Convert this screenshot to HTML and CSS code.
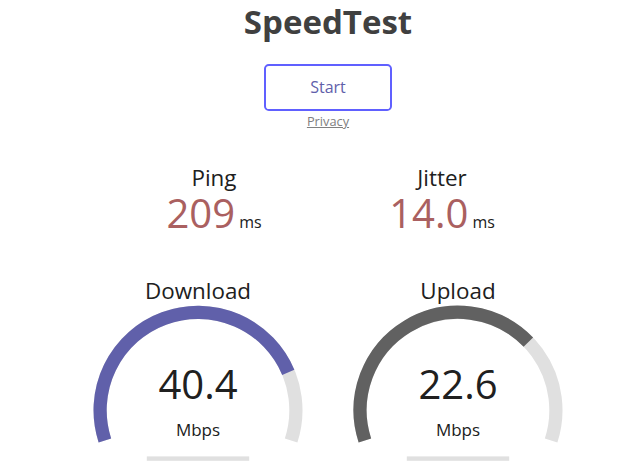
FILE: index.html
```html
<!DOCTYPE html>
<html lang="en">
<head>
<meta charset="utf-8">
<title>SpeedTest</title>
<link rel="stylesheet" href="styles.css">
</head>
<body>
<main class="page">
  <h1 class="title">SpeedTest</h1>
  <div class="start-btn">Start</div>
  <div class="privacy-row"><a class="privacy" href="#">Privacy</a></div>

  <section class="stats">
    <div class="stat">
      <div class="stat-name">Ping</div>
      <div class="stat-line"><span class="stat-value">209</span> <span class="stat-unit">ms</span></div>
    </div>
    <div class="stat">
      <div class="stat-name">Jitter</div>
      <div class="stat-line"><span class="stat-value">14.0</span> <span class="stat-unit">ms</span></div>
    </div>
  </section>

  <section class="gauges">
    <div class="gauge">
      <svg class="meter" viewBox="0 0 256 200" width="256" height="200">
        <path class="meter-bg" d="M34.89 166.45 A97.9 97.9 0 1 1 221.11 166.45"/>
        <path class="meter-dl" d="M34.89 166.45 A97.9 97.9 0 0 1 218.28 98.34"/>
        <rect class="meter-prog" x="76.8" y="182.4" width="102.4" height="4.4"/>
      </svg>
      <div class="gauge-name">Download</div>
      <div class="gauge-value">40.4</div>
      <div class="gauge-unit">Mbps</div>
    </div>
    <div class="gauge">
      <svg class="meter" viewBox="0 0 256 200" width="256" height="200">
        <path class="meter-bg" d="M34.89 166.45 A97.9 97.9 0 1 1 221.11 166.45"/>
        <path class="meter-ul" d="M34.89 166.45 A97.9 97.9 0 0 1 198.36 68.12"/>
        <rect class="meter-prog" x="76.8" y="182.4" width="102.4" height="4.4"/>
      </svg>
      <div class="gauge-name">Upload</div>
      <div class="gauge-value">22.6</div>
      <div class="gauge-unit">Mbps</div>
    </div>
  </section>
</main>
</body>
</html>
```

FILE: styles.css
```css
html, body {
  margin: 0;
  padding: 0;
  overflow: hidden;
  background: #ffffff;
}

body {
  font-family: "Open Sans", "Noto Sans", sans-serif;
  font-size: 16px;
  color: #202020;
}

.page {
  padding-left: 27px;
  display: flex;
  flex-direction: column;
  align-items: center;
  text-align: center;
}

.title {
  margin: 0;
  font-size: 33px;
  line-height: 44px;
  font-weight: 700;
  color: #404040;
}

.start-btn {
  margin-top: 20px;
  box-sizing: border-box;
  width: 128px;
  height: 47px;
  border: 2.4px solid #6060ff;
  border-radius: 4.8px;
  color: #6060aa;
  font-size: 16px;
  line-height: 42px;
}

.privacy-row {
  line-height: 16px;
  height: 16px;
  margin-top: 1px;
}

.privacy {
  font-size: 12.8px;
  color: #808080;
  text-decoration: underline;
}

.stats {
  margin-top: 35px;
  display: flex;
  gap: 4px;
}

.stat {
  width: 224px;
  height: 111px;
}

.stat-name {
  font-size: 22.4px;
  line-height: 30px;
}

.stat-line {
  line-height: 40px;
}

.stat-value {
  font-size: 40px;
  line-height: 40px;
  color: #aa6060;
}

.stat-unit {
  font-size: 16px;
}

.gauges {
  display: flex;
  gap: 4px;
}

.gauge {
  position: relative;
  width: 256px;
  height: 200px;
}

.meter {
  display: block;
}

.meter path {
  fill: none;
  stroke-width: 13.2;
}

.meter-bg { stroke: #e0e0e0; }
.meter-dl { stroke: #6060aa; }
.meter-ul { stroke: #616161; }
.meter-prog { fill: #e0e0e0; }

.gauge-name {
  position: absolute;
  top: 2.24px;
  left: 0;
  width: 100%;
  font-size: 22.4px;
  line-height: 30px;
}

.gauge-value {
  position: absolute;
  bottom: 70px;
  left: 0;
  width: 100%;
  font-size: 40px;
  line-height: 40px;
}

.gauge-unit {
  position: absolute;
  bottom: 33.6px;
  left: 0;
  width: 100%;
  font-size: 17px;
  line-height: 20px;
}
```
